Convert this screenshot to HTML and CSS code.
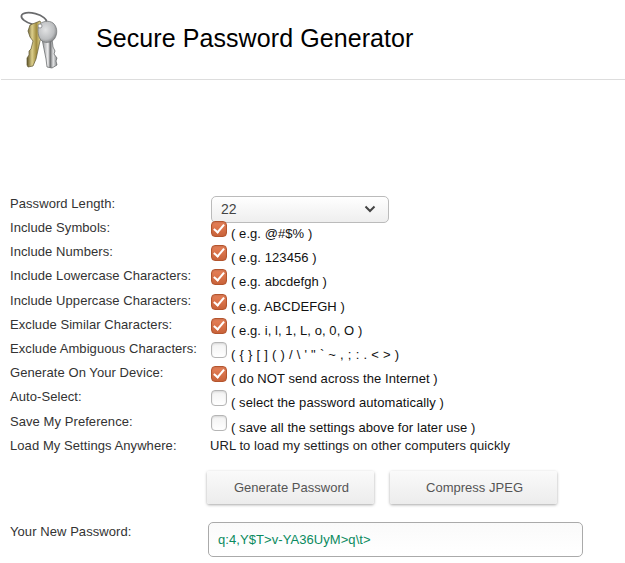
FILE: index.html
```html
<!DOCTYPE html>
<html lang="en">
  <head>
    <meta charset="UTF-8" />
    <meta name="viewport" content="width=device-width, initial-scale=1.0" />
    <link rel="stylesheet" href="styles.css">
    <title>Secure Password Generator</title>
  </head>
  <body>
    <header class="site-header">
      <svg class="logo" width="46" height="62" viewBox="0 0 46 62">
        <defs>
          <linearGradient id="gold" x1="0" y1="0" x2="1" y2="0">
            <stop offset="0" stop-color="#5f5428" />
            <stop offset="0.3" stop-color="#dccf8c" />
            <stop offset="0.55" stop-color="#a08c3e" />
            <stop offset="0.8" stop-color="#e6da9c" />
            <stop offset="1" stop-color="#665828" />
          </linearGradient>
          <linearGradient id="silver" x1="0" y1="0" x2="1" y2="0">
            <stop offset="0" stop-color="#8e9092" />
            <stop offset="0.4" stop-color="#f0f0f1" />
            <stop offset="0.55" stop-color="#6d6f71" />
            <stop offset="0.75" stop-color="#e3e4e5" />
            <stop offset="1" stop-color="#85878a" />
          </linearGradient>
          <radialGradient id="head" cx="0.4" cy="0.4" r="0.7">
            <stop offset="0" stop-color="#e2e3e4" />
            <stop offset="0.65" stop-color="#bcbec0" />
            <stop offset="1" stop-color="#707274" />
          </radialGradient>
        </defs>
        <ellipse cx="18" cy="10" rx="13" ry="5.5" transform="rotate(15 18 10)" fill="none" stroke="#6a6b6d" stroke-width="1.7" />
        <path d="M24 12 L14 16 L12 22 L14 28 L17 32 L15 40 L13 42 L13 46 L11 49 L11 56 L12 58 L17 57 L20 50 L24 32 L28 20 Z" fill="url(#gold)" stroke="#5f5630" stroke-width="0.7" />
        <path d="M26 30 L28 40 L30 50 L31 58 L36 59 L41 56 L40 52 L41 49 L38 45 L39 42 L37 38 L36 30 Z" fill="url(#silver)" stroke="#5f6163" stroke-width="0.7" />
        <path d="M23 16 C26 12 33 11 37 14 C41 17 42 24 39 29 C37 33 30 35 26 32 C22 29 21 21 23 16 Z" fill="url(#head)" stroke="#6f7173" stroke-width="0.7" />
        <circle cx="24" cy="17" r="2" fill="#fff" stroke="#77797b" stroke-width="0.7" />
      </svg>
      <h1>Secure Password Generator</h1>
    </header>

    <form class="settings">
      <div class="row row-select">
        <label>Password Length:</label>
        <div class="select"><span>22</span>
          <svg width="12" height="8" viewBox="0 0 12 8"><path d="M1.5 1.5 L6 6 L10.5 1.5" fill="none" stroke="#444" stroke-width="2" /></svg>
        </div>
      </div>
      <div class="row"><label>Include Symbols:</label><span class="check on"></span><span class="note">( e.g. @#$% )</span></div>
      <div class="row"><label>Include Numbers:</label><span class="check on"></span><span class="note">( e.g. 123456 )</span></div>
      <div class="row"><label>Include Lowercase Characters:</label><span class="check on"></span><span class="note">( e.g. abcdefgh )</span></div>
      <div class="row"><label>Include Uppercase Characters:</label><span class="check on"></span><span class="note">( e.g. ABCDEFGH )</span></div>
      <div class="row"><label>Exclude Similar Characters:</label><span class="check on"></span><span class="note">( e.g. i, l, 1, L, o, 0, O )</span></div>
      <div class="row"><label>Exclude Ambiguous Characters:</label><span class="check"></span><span class="note note-wide">( { } [ ] ( ) / \ ' " ` ~ , ; : . &lt; &gt; )</span></div>
      <div class="row"><label>Generate On Your Device:</label><span class="check on"></span><span class="note">( do NOT send across the Internet )</span></div>
      <div class="row"><label>Auto-Select:</label><span class="check"></span><span class="note">( select the password automatically )</span></div>
      <div class="row"><label>Save My Preference:</label><span class="check"></span><span class="note">( save all the settings above for later use )</span></div>
      <div class="row row-plain"><label>Load My Settings Anywhere:</label><span>URL to load my settings on other computers quickly</span></div>
      <div class="buttons">
        <button type="button">Generate Password</button>
        <button type="button">Compress JPEG</button>
      </div>
      <div class="row-output">
        <label>Your New Password:</label>
        <div class="output">q:4,Y$T&gt;v-YA36UyM&gt;q\t&gt;</div>
      </div>
    </form>
  </body>
</html>
```

FILE: styles.css
```css
body {
  margin: 0;
  font-family: "Liberation Sans", Arial, sans-serif;
  font-size: 13px;
  letter-spacing: 0.07px;
  color: #333;
  background: #fff;
}

.site-header {
  display: flex;
  align-items: center;
  height: 79px;
  margin-left: 1px;
  border-bottom: 1px solid #ddd;
}

.logo {
  margin-left: 15px;
  margin-top: 1px;
  flex: none;
}

h1 {
  margin: 0 0 3px 34px;
  font-size: 25px;
  font-weight: normal;
  letter-spacing: 0.08px;
  color: #000;
}

.settings {
  padding: 116px 0 0 10px;
}

.row {
  display: grid;
  grid-template-columns: 201px 16px 1fr;
  height: 24.2px;
}

.row label {
  line-height: 14px;
}

.row-select {
  display: flex;
  height: 25px;
}

.row-select label {
  width: 201px;
  line-height: 16px;
}

.select {
  box-sizing: border-box;
  display: flex;
  justify-content: space-between;
  align-items: center;
  width: 178px;
  height: 27px;
  padding: 0 12px 2px 9px;
  border: 1px solid #bbb;
  border-radius: 5px;
  background: linear-gradient(#fff, #eee);
  color: #444;
  font-size: 14px;
}

.check {
  box-sizing: border-box;
  width: 16px;
  height: 16px;
  border: 1px solid #b5b5b5;
  border-radius: 4px;
  background: linear-gradient(#f2f2f2, #fff);
  box-shadow: inset 0 1px 2px rgba(0, 0, 0, 0.12);
  position: relative;
}

.check.on {
  border-color: #b4552e;
  background: linear-gradient(#e8825a, #c9633a);
}

.check.on::after {
  content: "";
  position: absolute;
  left: 4px;
  top: 0;
  width: 4px;
  height: 9px;
  border: solid #fff;
  border-width: 0 2.5px 2.5px 0;
  transform: rotate(40deg);
}

.note {
  margin: 5px 0 0 4px;
  line-height: 15px;
  color: #111;
  white-space: nowrap;
}

.note-wide {
  word-spacing: 0.4px;
}

.row-plain {
  display: flex;
  height: 24px;
}

.row-plain label {
  width: 200px;
}

.row-plain span {
  line-height: 14px;
  color: #222;
}

.buttons {
  display: flex;
  gap: 16px;
  margin: 8px 0 0 197px;
}

.buttons button {
  width: 167px;
  height: 33px;
  padding-left: 8px;
  border: 0;
  border-radius: 2px;
  background: linear-gradient(#fafafa, #ececec);
  box-shadow: 0 1px 3px rgba(0, 0, 0, 0.35);
  color: #555;
  font: 13px "Liberation Sans", Arial, sans-serif;
  letter-spacing: 0.02px;
}

.row-output {
  display: flex;
  margin-top: 18px;
}

.row-output label {
  width: 198px;
  margin-top: 2px;
  line-height: 16px;
}

.output {
  box-sizing: border-box;
  width: 375px;
  height: 35px;
  padding: 0 10px 0 9px;
  line-height: 33px;
  border: 1px solid #aaa;
  border-radius: 5px;
  background: linear-gradient(#fafafa, #fff);
  color: #0a8a5e;
}
```
